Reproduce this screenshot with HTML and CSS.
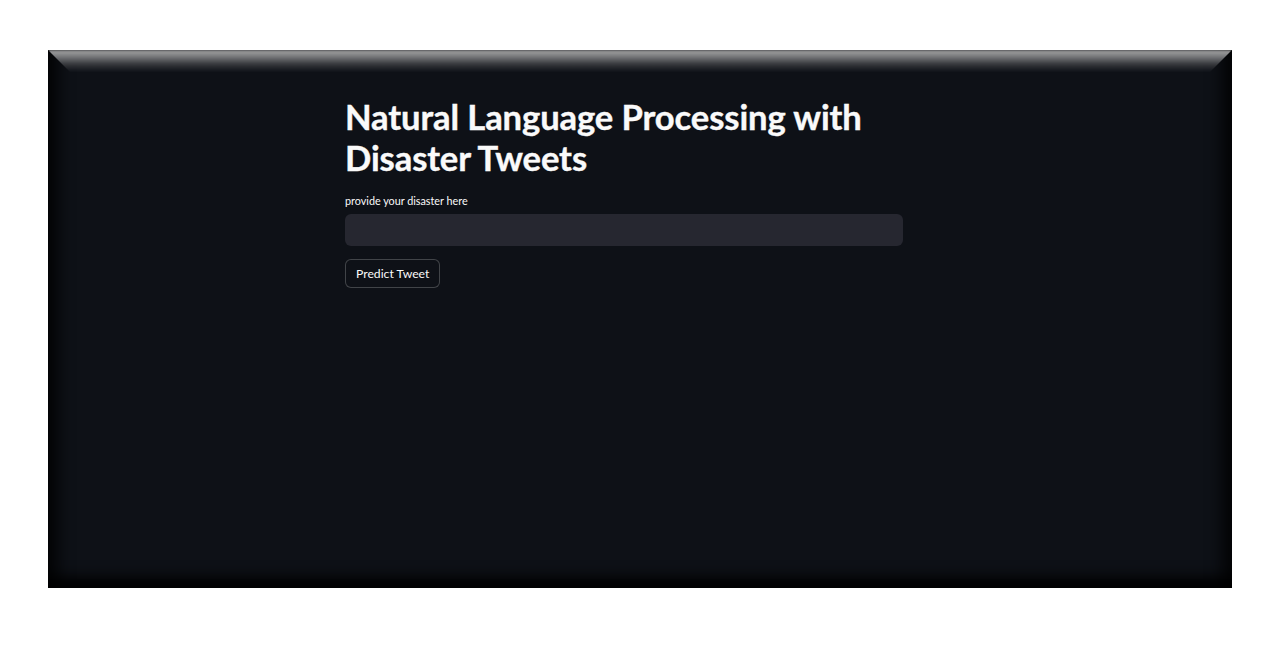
FILE: index.html
```html
<!DOCTYPE html>
<html lang="en">
<head>
<meta charset="utf-8">
<title>Natural Language Processing with Disaster Tweets</title>
<link rel="stylesheet" href="styles.css">
</head>
<body>
<div class="frame">
  <main class="app">
    <h1 class="title">Natural Language Processing with Disaster Tweets</h1>
    <label class="label" for="tweet">provide your disaster here</label>
    <input class="input" id="tweet" type="text">
    <button class="btn" type="button">Predict Tweet</button>
  </main>
</div>
</body>
</html>
```
FILE: styles.css
```css
html, body {
  margin: 0;
  padding: 0;
  background: #ffffff;
}
body {
  padding: 50px 48px 0 48px;
  font-family: "Lato", "Noto Sans", sans-serif;
}
.frame {
  position: relative;
  height: 538px;
  background: #0e1117;
  overflow: hidden;
  box-shadow:
    inset 20px 0 16px -10px rgba(0, 0, 0, 0.8),
    inset -20px 0 16px -10px rgba(0, 0, 0, 0.8),
    inset 0 -20px 14px -8px rgba(0, 0, 0, 0.85);
}
.frame::before {
  content: "";
  position: absolute;
  left: 0;
  right: 0;
  top: 0;
  height: 22px;
  background: linear-gradient(to bottom, #a9a9a9 0%, #76777a 30%, #35373b 65%, rgba(14, 17, 23, 0) 100%);
  clip-path: polygon(0 0, 100% 0, calc(100% - 22px) 100%, 22px 100%);
  filter: blur(1.5px);
}
.app {
  width: 558px;
  margin-left: 297px;
  padding-top: 46px;
  display: flex;
  flex-direction: column;
  align-items: flex-start;
}
.title {
  margin: 0;
  font-size: 34.6px;
  line-height: 41px;
  font-weight: 700;
  color: #fafafa;
  letter-spacing: -0.1px;
  width: 558px;
  -webkit-text-stroke: 0.4px #fafafa;
}
.label {
  margin-top: 16px;
  font-size: 10.8px;
  line-height: 14px;
  color: #fafafa;
}
.input {
  margin-top: 6px;
  box-sizing: border-box;
  width: 558px;
  height: 32px;
  border: none;
  border-radius: 6px;
  background: #262730;
  outline: none;
  color: #fafafa;
}
.btn {
  margin-top: 13px;
  box-sizing: border-box;
  height: 29px;
  padding: 0 10px;
  background: #0e1117;
  border: 1px solid rgba(250, 250, 250, 0.22);
  border-radius: 6px;
  color: #fafafa;
  font-family: "Lato", "Noto Sans", sans-serif;
  font-size: 12.2px;
}
```
